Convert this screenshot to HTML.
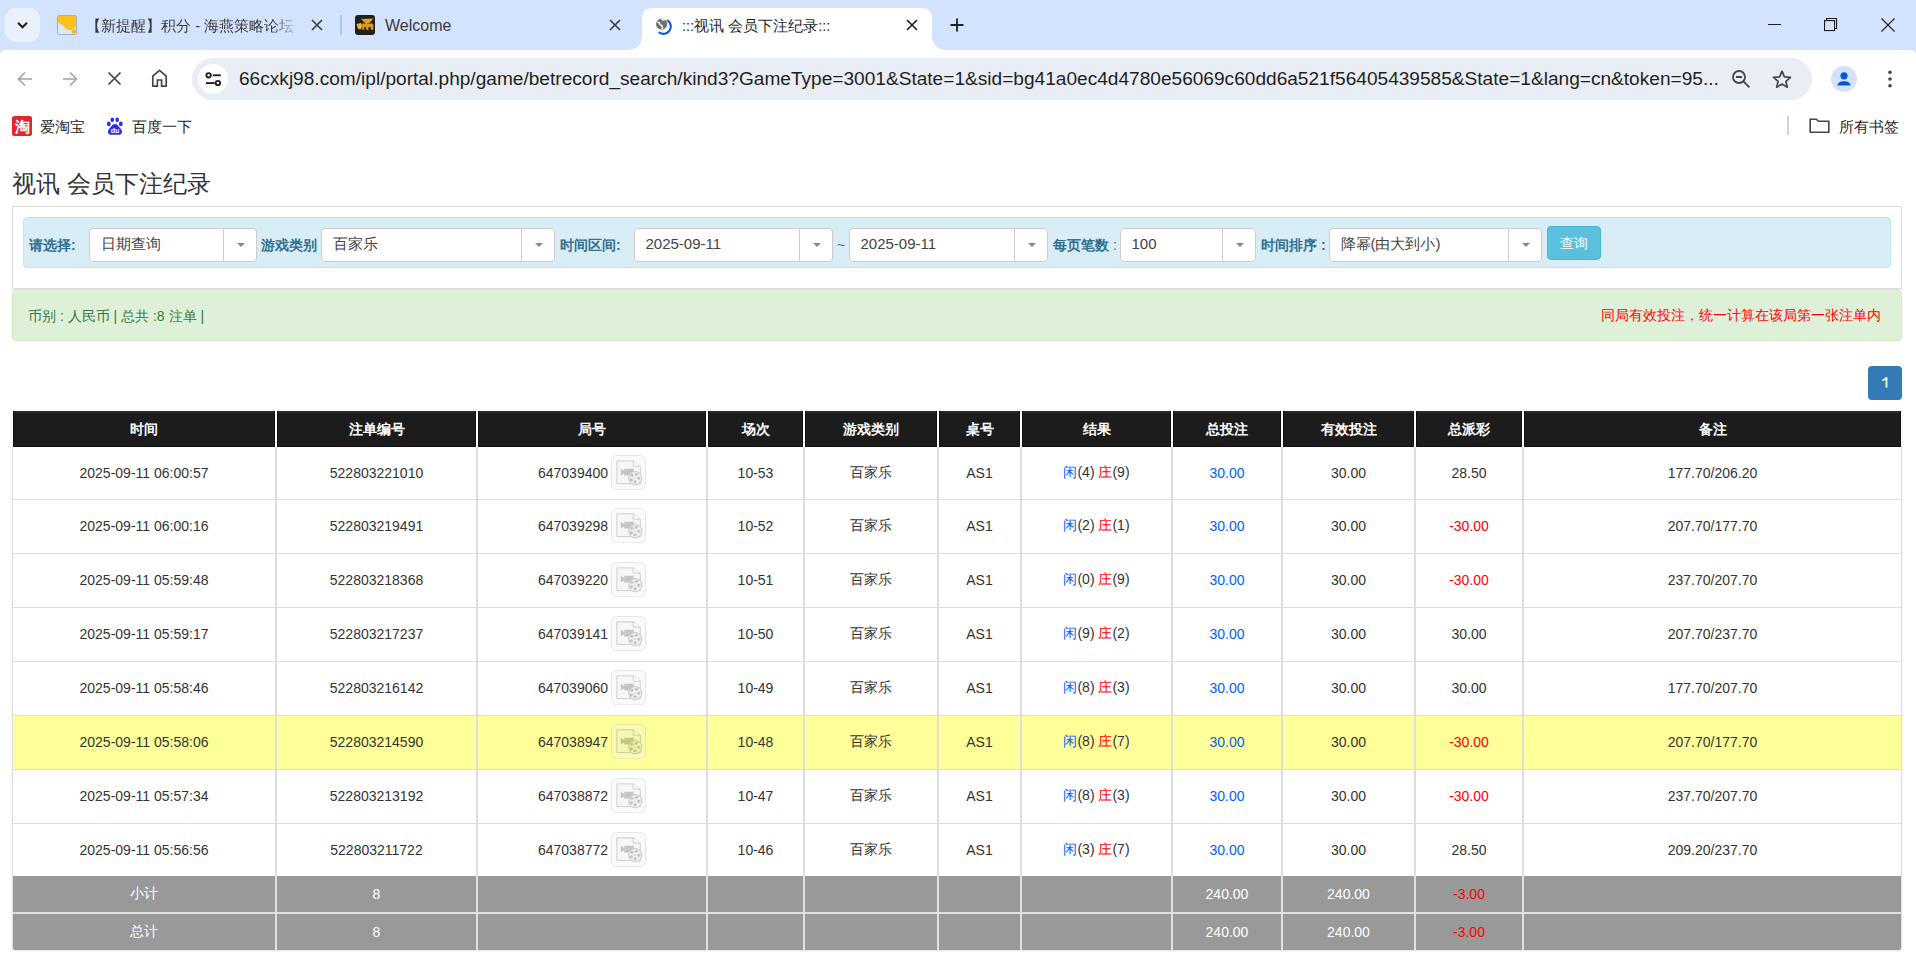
<!DOCTYPE html>
<html><head><meta charset="utf-8"><title>:::视讯 会员下注纪录:::</title>
<style>
*{box-sizing:border-box}
html,body{margin:0;padding:0}
body{width:1916px;height:968px;overflow:hidden;position:relative;background:#fff;font-family:"Liberation Sans",sans-serif;color:#333}
.abs{position:absolute}
/* chrome */
#tabstrip{position:absolute;left:0;top:0;width:1916px;height:62px;background:#d3e3fd}
#toolbar{position:absolute;left:0;top:50px;width:1916px;height:91px;background:#fff;border-top-left-radius:5px;border-top-right-radius:5px}
.tabtitle{position:absolute;font-size:15px;color:#1f1f1f;white-space:nowrap;line-height:20px}
#omni{position:absolute;left:192px;top:58px;width:1620px;height:42px;border-radius:21px;background:#e9eef6}
#url{position:absolute;left:239px;top:67px;font-size:19.1px;line-height:24px;color:#1f1f1f;white-space:nowrap}
.bm{position:absolute;font-size:15px;color:#1f1f1f;white-space:nowrap;line-height:20px}
/* page */
h3{position:absolute;left:12px;top:168px;margin:0;font-size:24px;font-weight:normal;line-height:32px;color:#333}
#panel{position:absolute;left:12px;top:206px;width:1890px;height:83px;border:1px solid #ddd;background:#fff}
#info{position:absolute;left:23px;top:217px;width:1868px;height:51px;border:1px solid #bce8f1;background:#d9edf7;border-radius:4px}
.lbl{position:absolute;top:236px;font-size:14px;line-height:18px;font-weight:bold;color:#31708f;white-space:nowrap}
.sel{position:absolute;top:228px;height:34px;border:1px solid #ccc;border-radius:4px;background:#fff}
.sel .v{position:absolute;left:10.5px;top:6.2px;font-size:15px;line-height:18px;color:#444;white-space:nowrap}
.sel .sep{position:absolute;top:0;bottom:0;width:1px;background:#ccc}
.sel .car{position:absolute;top:14px;width:0;height:0;border-left:4px solid transparent;border-right:4px solid transparent;border-top:4.5px solid #888;margin-left:-0.5px}
#btn{position:absolute;left:1547px;top:226px;width:54px;height:34px;background:#5bc0de;border:1px solid #46b8da;border-radius:4px;color:#fff;font-size:14px;line-height:32px;text-align:center}
#succ{position:absolute;left:12px;top:289px;width:1890px;height:52px;border:1px solid #d6e9c6;background:#dff0d8;border-radius:4px}
#succ .l{position:absolute;left:15px;top:16.5px;font-size:14px;line-height:18px;color:#3c763d;white-space:nowrap}
#succ .r{position:absolute;right:20px;top:16.4px;font-size:14px;line-height:18px;color:#ff0000;white-space:nowrap}
#page1{position:absolute;left:1868px;top:366px;width:34px;height:34px;background:#337ab7;border-radius:4px;color:#fff;font-size:14px;line-height:34px;text-align:center}
/* table */
#tbl{position:absolute;left:12px;top:410px;width:1890px;border-collapse:separate;border-spacing:0;table-layout:fixed;border-radius:3px;box-shadow:0 1px 2px rgba(0,0,0,.13)}
#tbl th{height:37px;background:#1c1c1c;color:#fff;font-size:14px;font-weight:bold;text-align:center;padding:2px 0 0;border-left:1px solid #fff;border-right:1px solid #fff;border-top:1px solid #fff;box-shadow:inset 1px 0 #101010,inset -1px 0 #101010,inset 0 -1px #101010,inset 0 2px #2a2a2a}
#tbl td{font-size:14px;text-align:center;padding:0;border-left:1px solid #ddd;border-right:1px solid #ddd;border-bottom:1px solid #ddd;vertical-align:middle;color:#333;white-space:nowrap;background:#fff}
#tbl tr.last td{border-bottom:none}
#tbl tr.mid td{padding-bottom:1px}
#tbl tr.hl td{background:#ffff99}
#tbl tr.sum td{background:#999;color:#fff;height:36px;border-bottom:none;border-left-color:#e0e0e0;border-right-color:#e0e0e0}
#tbl tr.s2 td{border-top:2px solid #e0e0e0;height:38px}
#tbl tr.s2 td:first-child{border-bottom-left-radius:3px}
#tbl tr.s2 td:last-child{border-bottom-right-radius:3px}
.blue{color:#0060ff}
.red{color:#ff0000}
.gno{display:inline-block;vertical-align:middle}
.film{display:inline-block;vertical-align:middle;margin-left:3px;position:relative;top:-1px}
</style></head>
<body>
<div id="tabstrip"></div>
<!-- tab dropdown -->
<div class="abs" style="left:5px;top:8px;width:35px;height:34px;border-radius:11px;background:#e9f1fe"></div>
<svg class="abs" style="left:15px;top:18px" width="15" height="15" viewBox="0 0 15 15"><path d="M3 4.8l4.5 4.5 4.5-4.5" fill="none" stroke="#1f1f1f" stroke-width="2.1"/></svg>
<!-- tab1 -->
<svg class="abs" style="left:57px;top:15px" width="20" height="20" viewBox="0 0 20 20"><rect x="0.5" y="0.5" width="19" height="19" rx="1" fill="#dfe7f2" stroke="#9fb0c8"/><path d="M1 1h18v8.5c0 3-2.5 5.5-6.5 5.5-3 0-4.5-2-5.5-3.5C6 10 3 9.5 1 7z" fill="#f8c21f"/><circle cx="16.8" cy="16.5" r="2.3" fill="#f6b51c"/></svg>
<div class="tabtitle" style="left:86px;top:16px;width:212px;overflow:hidden;color:#3a3a3a;-webkit-mask-image:linear-gradient(90deg,#000 186px,transparent 214px)">【新提醒】积分 - 海燕策略论坛</div>
<svg class="abs" style="left:311px;top:19px" width="12" height="12" viewBox="0 0 12 12"><path d="M1 1l10 10M11 1L1 11" stroke="#3c3c3c" stroke-width="1.6"/></svg>
<div class="abs" style="left:340px;top:15px;width:2px;height:20px;background:#a8c7fa;border-radius:1px"></div>
<!-- tab2 -->
<svg class="abs" style="left:355px;top:15px" width="20" height="20" viewBox="0 0 20 20"><rect width="20" height="20" rx="3" fill="#1f1f1f"/><path d="M6 4L18.5 3.5 15 7.5 11 9z" fill="#e2a21b"/><path d="M1.5 9L6 8l1.5 3-2 3.5L3 14z" fill="#eab52a"/><path d="M7 8.5h10.5q1.5 1 1 3.5H7.5z" fill="#d99c17"/><rect x="7.3" y="11.5" width="2" height="3.3" fill="#d99c17"/><rect x="11" y="11.5" width="2.5" height="3.3" fill="#d99c17"/><rect x="15.8" y="11.5" width="2.5" height="3.3" fill="#d99c17"/></svg>
<div class="tabtitle" style="left:385px;top:16px;font-size:16px;color:#3a3a3a">Welcome</div>
<svg class="abs" style="left:609px;top:19px" width="12" height="12" viewBox="0 0 12 12"><path d="M1 1l10 10M11 1L1 11" stroke="#3c3c3c" stroke-width="1.6"/></svg>
<!-- active tab -->
<svg class="abs" style="left:626px;top:7px" width="322" height="44" viewBox="0 0 322 44"><path d="M0 43 Q16 43 16 28 V12 Q16 1 27 1 H295 Q306 1 306 12 V28 Q306 43 322 43 V44 H0z" fill="#fff"/></svg>
<svg class="abs" style="left:654px;top:17px" width="20" height="20" viewBox="0 0 20 20"><circle cx="7.6" cy="7.1" r="5.6" fill="#6e7074"/><path d="M3 5.2c1.6-.2 2.8.6 2.8 1.8 0 1.1 1.7 1.1 2.4 2.2.6 1 .3 2.3-.5 3.1M7.4 1.6c.4 1.1 1.7 1.7 3.2 1.4" fill="none" stroke="#fff" stroke-width="1.4"/><path d="M13.7 3.5A7.3 7.3 0 0 1 5.3 15.5" fill="none" stroke="#0b57d0" stroke-width="2.1" stroke-linecap="round"/></svg>
<div class="tabtitle" style="left:682px;top:16px;font-size:14.6px">:::视讯 会员下注纪录:::</div>
<svg class="abs" style="left:906px;top:19px" width="12" height="12" viewBox="0 0 12 12"><path d="M1 1l10 10M11 1L1 11" stroke="#1f1f1f" stroke-width="1.6"/></svg>
<svg class="abs" style="left:950px;top:18px" width="14" height="14" viewBox="0 0 14 14"><path d="M7 0.5v13M0.5 7h13" stroke="#1f1f1f" stroke-width="1.8"/></svg>
<!-- window controls -->
<div class="abs" style="left:1768px;top:24px;width:13px;height:1px;background:#1f1f1f"></div>
<svg class="abs" style="left:1823px;top:17px" width="15" height="15" viewBox="0 0 15 15"><rect x="1.55" y="3.55" width="10" height="10" fill="none" stroke="#1f1f1f" stroke-width="1.1"/><path d="M3.55 3.55V1.55h10v10h-2" fill="none" stroke="#1f1f1f" stroke-width="1.1"/></svg>
<svg class="abs" style="left:1881px;top:18px" width="14" height="14" viewBox="0 0 14 14"><path d="M0.5 0.5l13 13M13.5 0.5l-13 13" stroke="#1f1f1f" stroke-width="1.1"/></svg>

<div id="toolbar"></div>
<!-- nav buttons -->
<svg class="abs" style="left:16px;top:70px" width="18" height="18" viewBox="0 0 18 18"><path d="M16 9H3M9 2.5L2.5 9 9 15.5" fill="none" stroke="#a3a3a3" stroke-width="1.6"/></svg>
<svg class="abs" style="left:61px;top:70px" width="18" height="18" viewBox="0 0 18 18"><path d="M2 9h13M9 2.5L15.5 9 9 15.5" fill="none" stroke="#a3a3a3" stroke-width="1.6"/></svg>
<svg class="abs" style="left:107px;top:71px" width="15" height="15" viewBox="0 0 15 15"><path d="M1.5 1.5l12 12M13.5 1.5l-12 12" stroke="#474747" stroke-width="1.7"/></svg>
<svg class="abs" style="left:150px;top:68.4px" width="19" height="20" viewBox="0 0 19 20"><path d="M2.8 18.2V8.2L9.5 2.3l6.7 5.9v10H11.6v-6.2H7.4v6.2z" fill="none" stroke="#474747" stroke-width="1.7" stroke-linejoin="miter"/></svg>
<div id="omni"></div>
<div class="abs" style="left:198px;top:64px;width:30px;height:30px;border-radius:15px;background:#fff"></div>
<svg class="abs" style="left:204px;top:71px" width="18" height="17" viewBox="0 0 18 17"><circle cx="4.6" cy="4.3" r="2.2" fill="none" stroke="#1f1f1f" stroke-width="1.9"/><path d="M8.7 4.3H16.8" stroke="#1f1f1f" stroke-width="1.9"/><circle cx="13.9" cy="12.1" r="2.2" fill="none" stroke="#1f1f1f" stroke-width="1.9"/><path d="M1.9 12.1h8.8" stroke="#1f1f1f" stroke-width="1.9"/></svg>
<div id="url">66cxkj98.com/ipl/portal.php/game/betrecord_search/kind3?GameType=3001&amp;State=1&amp;sid=bg41a0ec4d4780e56069c60dd6a521f56405439585&amp;State=1&amp;lang=cn&amp;token=95...</div>
<svg class="abs" style="left:1731px;top:69px" width="21" height="21" viewBox="0 0 21 21"><circle cx="8" cy="8" r="6" fill="none" stroke="#474747" stroke-width="1.8"/><path d="M5 8h6M12.4 12.4l6 6" stroke="#474747" stroke-width="1.9"/></svg>
<svg class="abs" style="left:1771px;top:69px" width="22" height="21" viewBox="0 0 22 21"><path d="M11 2.2l2.4 5.6 6.1.5-4.6 4 1.4 5.9L11 15.1l-5.3 3.1 1.4-5.9-4.6-4 6.1-.5z" fill="none" stroke="#474747" stroke-width="1.7" stroke-linejoin="round"/></svg>
<div class="abs" style="left:1831px;top:66px;width:26px;height:26px;border-radius:13px;background:#d3e3fd"></div>
<svg class="abs" style="left:1835px;top:70px" width="18" height="18" viewBox="0 0 18 18"><circle cx="9" cy="5.8" r="3.6" fill="#0b57d0"/><path d="M2.5 15.5c0-2.8 3-4.3 6.5-4.3s6.5 1.5 6.5 4.3z" fill="#0b57d0"/></svg>
<svg class="abs" style="left:1885px;top:69px" width="10" height="20" viewBox="0 0 10 20"><circle cx="5" cy="3.2" r="1.8" fill="#474747"/><circle cx="5" cy="10" r="1.8" fill="#474747"/><circle cx="5" cy="16.8" r="1.8" fill="#474747"/></svg>
<!-- bookmarks -->
<svg class="abs" style="left:12px;top:116px" width="20" height="20" viewBox="0 0 20 20"><rect width="20" height="20" rx="2.5" fill="#e3262d"/><text x="10" y="15.5" font-size="15" font-weight="bold" fill="#fff" text-anchor="middle">淘</text></svg>
<div class="bm" style="left:40px;top:117px">爱淘宝</div>
<svg class="abs" style="left:106px;top:116px" width="18" height="20" viewBox="0 0 18 20"><ellipse cx="2.8" cy="7.9" rx="1.9" ry="2.3" fill="#2932e1"/><ellipse cx="6.3" cy="3.8" rx="1.8" ry="2.4" fill="#2932e1"/><ellipse cx="11.2" cy="3.8" rx="1.8" ry="2.4" fill="#2932e1"/><ellipse cx="14.8" cy="7.9" rx="1.9" ry="2.3" fill="#2932e1"/><path d="M9 8c-2.6 0-4 3-6 5.2-2 2.2-1 5.6 2.2 5.6h7.6c3.2 0 4.2-3.4 2.2-5.6C13 11 11.6 8 9 8z" fill="#2932e1"/><text x="9" y="17.3" font-size="7" font-weight="bold" fill="#fff" text-anchor="middle" font-family="Liberation Sans">du</text></svg>
<div class="bm" style="left:132px;top:117px">百度一下</div>
<div class="abs" style="left:1787px;top:116px;width:2px;height:19px;background:#c2d7f8"></div>
<svg class="abs" style="left:1809px;top:117px" width="22" height="17" viewBox="0 0 22 17"><path d="M1.2 2.3h6.2l2 2h10.4v10.9H1.2z" fill="none" stroke="#474747" stroke-width="1.6"/></svg>
<div class="bm" style="left:1839px;top:117px">所有书签</div>

<!-- page -->
<h3>视讯 会员下注纪录</h3>
<div id="panel"></div>
<div id="info"></div>
<div class="lbl" style="left:29px">请选择:</div>
<div class="sel" style="left:89px;width:168px"><span class="v">日期查询</span><span class="sep" style="left:133px"></span><span class="car" style="left:147px"></span></div>
<div class="lbl" style="left:261px">游戏类别</div>
<div class="sel" style="left:321px;width:234px"><span class="v">百家乐</span><span class="sep" style="left:199px"></span><span class="car" style="left:213px"></span></div>
<div class="lbl" style="left:560px">时间区间:</div>
<div class="sel" style="left:634px;width:199px"><span class="v">2025-09-11</span><span class="sep" style="left:164px"></span><span class="car" style="left:178px"></span></div>
<div class="lbl" style="left:837px;font-weight:normal;color:#31708f">~</div>
<div class="sel" style="left:849px;width:199px"><span class="v">2025-09-11</span><span class="sep" style="left:164px"></span><span class="car" style="left:178px"></span></div>
<div class="lbl" style="left:1053px">每页笔数 <span style="font-weight:normal">:</span></div>
<div class="sel" style="left:1120px;width:136px"><span class="v">100</span><span class="sep" style="left:101px"></span><span class="car" style="left:115px"></span></div>
<div class="lbl" style="left:1261px">时间排序 :</div>
<div class="sel" style="left:1329px;width:213px"><span class="v">降幂(由大到小)</span><span class="sep" style="left:178px"></span><span class="car" style="left:192px"></span></div>
<div id="btn">查询</div>
<div id="succ"><span class="l">币别 : 人民币 | 总共 :8 注单 |</span><span class="r">同局有效投注，统一计算在该局第一张注单内</span></div>
<div id="page1"><svg style="position:absolute;left:14px;top:11.2px" width="6" height="11" viewBox="0 0 6 11"><path d="M3.6 0.2H5.4V10.4H3.6V2.6Q2.4 3.6 0.4 4.3V2.6Q2.6 1.7 3.6 0.2z" fill="#fff"/></svg></div>

<table id="tbl">
<colgroup><col style="width:264px"><col style="width:201px"><col style="width:230px"><col style="width:97px"><col style="width:134px"><col style="width:83px"><col style="width:151px"><col style="width:110px"><col style="width:133px"><col style="width:108px"><col style="width:379px"></colgroup>
<thead><tr><th>时间</th><th>注单编号</th><th>局号</th><th>场次</th><th>游戏类别</th><th>桌号</th><th>结果</th><th>总投注</th><th>有效投注</th><th>总派彩</th><th>备注</th></tr></thead>
<tbody>
<tr class="" style="height:53px"><td>2025-09-11 06:00:57</td><td>522803221010</td><td><span class="gno">647039400</span><svg class="film" width="35" height="35" viewBox="0 0 35 35"><g opacity="0.35"><rect x="0.5" y="0.5" width="34" height="34.2" rx="5" fill="#f1f1f1" stroke="#bdbdbd"/>
<path d="M5.9 5.9h16.4l7 5.3v17.4H5.9z" fill="#e8e8e8" stroke="#767676"/><path d="M22.3 5.9v5.3h7" fill="#fff" stroke="#767676"/>
<path d="M9.8 13.7l3.4 2.2v-2.2h9.6v6.9h-9.6v-2.2l-3.4 2.2z" fill="#5c5c5c"/>
<circle cx="24.3" cy="23.2" r="6.6" fill="#d4d4d4" stroke="#626262"/>
<circle cx="21" cy="20.3" r="1.55" fill="#565656"/><circle cx="25.4" cy="19.3" r="1.55" fill="#565656"/><circle cx="27.8" cy="23.2" r="1.55" fill="#565656"/><circle cx="24.1" cy="26.7" r="1.55" fill="#565656"/><circle cx="20.3" cy="24.9" r="1.55" fill="#565656"/><circle cx="23.8" cy="23.2" r="0.6" fill="#565656"/>
</g></svg></td><td>10-53</td><td>百家乐</td><td>AS1</td><td><span class="blue">闲</span>(4) <span class="red">庄</span>(9)</td><td><span class="blue">30.00</span></td><td>30.00</td><td><span>28.50</span></td><td>177.70/206.20</td></tr>
<tr class=" mid" style="height:54px"><td>2025-09-11 06:00:16</td><td>522803219491</td><td><span class="gno">647039298</span><svg class="film" width="35" height="35" viewBox="0 0 35 35"><g opacity="0.35"><rect x="0.5" y="0.5" width="34" height="34.2" rx="5" fill="#f1f1f1" stroke="#bdbdbd"/>
<path d="M5.9 5.9h16.4l7 5.3v17.4H5.9z" fill="#e8e8e8" stroke="#767676"/><path d="M22.3 5.9v5.3h7" fill="#fff" stroke="#767676"/>
<path d="M9.8 13.7l3.4 2.2v-2.2h9.6v6.9h-9.6v-2.2l-3.4 2.2z" fill="#5c5c5c"/>
<circle cx="24.3" cy="23.2" r="6.6" fill="#d4d4d4" stroke="#626262"/>
<circle cx="21" cy="20.3" r="1.55" fill="#565656"/><circle cx="25.4" cy="19.3" r="1.55" fill="#565656"/><circle cx="27.8" cy="23.2" r="1.55" fill="#565656"/><circle cx="24.1" cy="26.7" r="1.55" fill="#565656"/><circle cx="20.3" cy="24.9" r="1.55" fill="#565656"/><circle cx="23.8" cy="23.2" r="0.6" fill="#565656"/>
</g></svg></td><td>10-52</td><td>百家乐</td><td>AS1</td><td><span class="blue">闲</span>(2) <span class="red">庄</span>(1)</td><td><span class="blue">30.00</span></td><td>30.00</td><td><span class="red">-30.00</span></td><td>207.70/177.70</td></tr>
<tr class=" mid" style="height:54px"><td>2025-09-11 05:59:48</td><td>522803218368</td><td><span class="gno">647039220</span><svg class="film" width="35" height="35" viewBox="0 0 35 35"><g opacity="0.35"><rect x="0.5" y="0.5" width="34" height="34.2" rx="5" fill="#f1f1f1" stroke="#bdbdbd"/>
<path d="M5.9 5.9h16.4l7 5.3v17.4H5.9z" fill="#e8e8e8" stroke="#767676"/><path d="M22.3 5.9v5.3h7" fill="#fff" stroke="#767676"/>
<path d="M9.8 13.7l3.4 2.2v-2.2h9.6v6.9h-9.6v-2.2l-3.4 2.2z" fill="#5c5c5c"/>
<circle cx="24.3" cy="23.2" r="6.6" fill="#d4d4d4" stroke="#626262"/>
<circle cx="21" cy="20.3" r="1.55" fill="#565656"/><circle cx="25.4" cy="19.3" r="1.55" fill="#565656"/><circle cx="27.8" cy="23.2" r="1.55" fill="#565656"/><circle cx="24.1" cy="26.7" r="1.55" fill="#565656"/><circle cx="20.3" cy="24.9" r="1.55" fill="#565656"/><circle cx="23.8" cy="23.2" r="0.6" fill="#565656"/>
</g></svg></td><td>10-51</td><td>百家乐</td><td>AS1</td><td><span class="blue">闲</span>(0) <span class="red">庄</span>(9)</td><td><span class="blue">30.00</span></td><td>30.00</td><td><span class="red">-30.00</span></td><td>237.70/207.70</td></tr>
<tr class=" mid" style="height:54px"><td>2025-09-11 05:59:17</td><td>522803217237</td><td><span class="gno">647039141</span><svg class="film" width="35" height="35" viewBox="0 0 35 35"><g opacity="0.35"><rect x="0.5" y="0.5" width="34" height="34.2" rx="5" fill="#f1f1f1" stroke="#bdbdbd"/>
<path d="M5.9 5.9h16.4l7 5.3v17.4H5.9z" fill="#e8e8e8" stroke="#767676"/><path d="M22.3 5.9v5.3h7" fill="#fff" stroke="#767676"/>
<path d="M9.8 13.7l3.4 2.2v-2.2h9.6v6.9h-9.6v-2.2l-3.4 2.2z" fill="#5c5c5c"/>
<circle cx="24.3" cy="23.2" r="6.6" fill="#d4d4d4" stroke="#626262"/>
<circle cx="21" cy="20.3" r="1.55" fill="#565656"/><circle cx="25.4" cy="19.3" r="1.55" fill="#565656"/><circle cx="27.8" cy="23.2" r="1.55" fill="#565656"/><circle cx="24.1" cy="26.7" r="1.55" fill="#565656"/><circle cx="20.3" cy="24.9" r="1.55" fill="#565656"/><circle cx="23.8" cy="23.2" r="0.6" fill="#565656"/>
</g></svg></td><td>10-50</td><td>百家乐</td><td>AS1</td><td><span class="blue">闲</span>(9) <span class="red">庄</span>(2)</td><td><span class="blue">30.00</span></td><td>30.00</td><td><span>30.00</span></td><td>207.70/237.70</td></tr>
<tr class=" mid" style="height:54px"><td>2025-09-11 05:58:46</td><td>522803216142</td><td><span class="gno">647039060</span><svg class="film" width="35" height="35" viewBox="0 0 35 35"><g opacity="0.35"><rect x="0.5" y="0.5" width="34" height="34.2" rx="5" fill="#f1f1f1" stroke="#bdbdbd"/>
<path d="M5.9 5.9h16.4l7 5.3v17.4H5.9z" fill="#e8e8e8" stroke="#767676"/><path d="M22.3 5.9v5.3h7" fill="#fff" stroke="#767676"/>
<path d="M9.8 13.7l3.4 2.2v-2.2h9.6v6.9h-9.6v-2.2l-3.4 2.2z" fill="#5c5c5c"/>
<circle cx="24.3" cy="23.2" r="6.6" fill="#d4d4d4" stroke="#626262"/>
<circle cx="21" cy="20.3" r="1.55" fill="#565656"/><circle cx="25.4" cy="19.3" r="1.55" fill="#565656"/><circle cx="27.8" cy="23.2" r="1.55" fill="#565656"/><circle cx="24.1" cy="26.7" r="1.55" fill="#565656"/><circle cx="20.3" cy="24.9" r="1.55" fill="#565656"/><circle cx="23.8" cy="23.2" r="0.6" fill="#565656"/>
</g></svg></td><td>10-49</td><td>百家乐</td><td>AS1</td><td><span class="blue">闲</span>(8) <span class="red">庄</span>(3)</td><td><span class="blue">30.00</span></td><td>30.00</td><td><span>30.00</span></td><td>177.70/207.70</td></tr>
<tr class="hl mid" style="height:54px"><td>2025-09-11 05:58:06</td><td>522803214590</td><td><span class="gno">647038947</span><svg class="film" width="35" height="35" viewBox="0 0 35 35"><g opacity="0.35"><rect x="0.5" y="0.5" width="34" height="34.2" rx="5" fill="#f1f1f1" stroke="#bdbdbd"/>
<path d="M5.9 5.9h16.4l7 5.3v17.4H5.9z" fill="#e8e8e8" stroke="#767676"/><path d="M22.3 5.9v5.3h7" fill="#fff" stroke="#767676"/>
<path d="M9.8 13.7l3.4 2.2v-2.2h9.6v6.9h-9.6v-2.2l-3.4 2.2z" fill="#5c5c5c"/>
<circle cx="24.3" cy="23.2" r="6.6" fill="#d4d4d4" stroke="#626262"/>
<circle cx="21" cy="20.3" r="1.55" fill="#565656"/><circle cx="25.4" cy="19.3" r="1.55" fill="#565656"/><circle cx="27.8" cy="23.2" r="1.55" fill="#565656"/><circle cx="24.1" cy="26.7" r="1.55" fill="#565656"/><circle cx="20.3" cy="24.9" r="1.55" fill="#565656"/><circle cx="23.8" cy="23.2" r="0.6" fill="#565656"/>
</g></svg></td><td>10-48</td><td>百家乐</td><td>AS1</td><td><span class="blue">闲</span>(8) <span class="red">庄</span>(7)</td><td><span class="blue">30.00</span></td><td>30.00</td><td><span class="red">-30.00</span></td><td>207.70/177.70</td></tr>
<tr class=" mid" style="height:54px"><td>2025-09-11 05:57:34</td><td>522803213192</td><td><span class="gno">647038872</span><svg class="film" width="35" height="35" viewBox="0 0 35 35"><g opacity="0.35"><rect x="0.5" y="0.5" width="34" height="34.2" rx="5" fill="#f1f1f1" stroke="#bdbdbd"/>
<path d="M5.9 5.9h16.4l7 5.3v17.4H5.9z" fill="#e8e8e8" stroke="#767676"/><path d="M22.3 5.9v5.3h7" fill="#fff" stroke="#767676"/>
<path d="M9.8 13.7l3.4 2.2v-2.2h9.6v6.9h-9.6v-2.2l-3.4 2.2z" fill="#5c5c5c"/>
<circle cx="24.3" cy="23.2" r="6.6" fill="#d4d4d4" stroke="#626262"/>
<circle cx="21" cy="20.3" r="1.55" fill="#565656"/><circle cx="25.4" cy="19.3" r="1.55" fill="#565656"/><circle cx="27.8" cy="23.2" r="1.55" fill="#565656"/><circle cx="24.1" cy="26.7" r="1.55" fill="#565656"/><circle cx="20.3" cy="24.9" r="1.55" fill="#565656"/><circle cx="23.8" cy="23.2" r="0.6" fill="#565656"/>
</g></svg></td><td>10-47</td><td>百家乐</td><td>AS1</td><td><span class="blue">闲</span>(8) <span class="red">庄</span>(3)</td><td><span class="blue">30.00</span></td><td>30.00</td><td><span class="red">-30.00</span></td><td>237.70/207.70</td></tr>
<tr class=" last" style="height:52px"><td>2025-09-11 05:56:56</td><td>522803211722</td><td><span class="gno">647038772</span><svg class="film" width="35" height="35" viewBox="0 0 35 35"><g opacity="0.35"><rect x="0.5" y="0.5" width="34" height="34.2" rx="5" fill="#f1f1f1" stroke="#bdbdbd"/>
<path d="M5.9 5.9h16.4l7 5.3v17.4H5.9z" fill="#e8e8e8" stroke="#767676"/><path d="M22.3 5.9v5.3h7" fill="#fff" stroke="#767676"/>
<path d="M9.8 13.7l3.4 2.2v-2.2h9.6v6.9h-9.6v-2.2l-3.4 2.2z" fill="#5c5c5c"/>
<circle cx="24.3" cy="23.2" r="6.6" fill="#d4d4d4" stroke="#626262"/>
<circle cx="21" cy="20.3" r="1.55" fill="#565656"/><circle cx="25.4" cy="19.3" r="1.55" fill="#565656"/><circle cx="27.8" cy="23.2" r="1.55" fill="#565656"/><circle cx="24.1" cy="26.7" r="1.55" fill="#565656"/><circle cx="20.3" cy="24.9" r="1.55" fill="#565656"/><circle cx="23.8" cy="23.2" r="0.6" fill="#565656"/>
</g></svg></td><td>10-46</td><td>百家乐</td><td>AS1</td><td><span class="blue">闲</span>(3) <span class="red">庄</span>(7)</td><td><span class="blue">30.00</span></td><td>30.00</td><td><span>28.50</span></td><td>209.20/237.70</td></tr>
<tr class="sum s1"><td>小计</td><td>8</td><td></td><td></td><td></td><td></td><td></td><td>240.00</td><td>240.00</td><td><span class="red">-3.00</span></td><td></td></tr><tr class="sum s2"><td>总计</td><td>8</td><td></td><td></td><td></td><td></td><td></td><td>240.00</td><td>240.00</td><td><span class="red">-3.00</span></td><td></td></tr>
</tbody>
</table>
</body></html>
